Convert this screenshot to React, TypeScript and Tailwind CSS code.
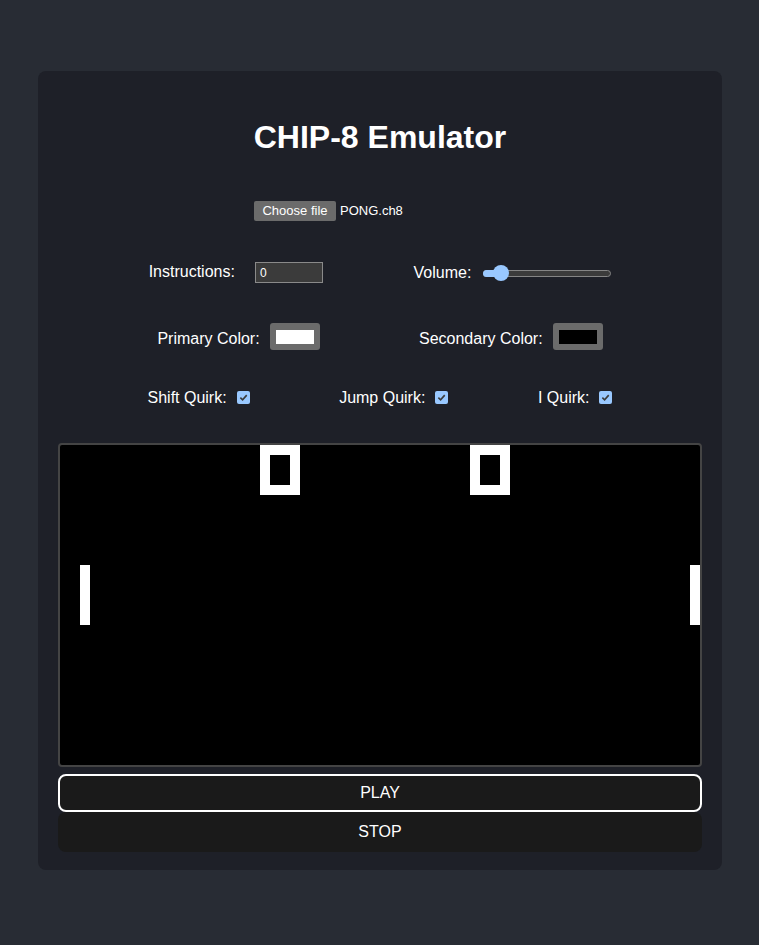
import React from 'react';

// CHIP-8 display: 64x32 pixels, drawn 10x
const pixels: [number, number][] = [];

function addDigitZero(x: number, y: number) {
  const rows = [0xf0, 0x90, 0x90, 0x90, 0xf0];
  rows.forEach((row, dy) => {
    for (let dx = 0; dx < 4; dx++) {
      if (row & (0x80 >> dx)) pixels.push([x + dx, y + dy]);
    }
  });
}

addDigitZero(20, 0);
addDigitZero(41, 0);
for (let y = 12; y < 18; y++) {
  pixels.push([2, y]);
  pixels.push([63, y]);
}

function Checkbox() {
  return (
    <span className="ml-[10px] inline-flex h-[13px] w-[13px] items-center justify-center rounded-[2px] bg-[#99c8ff]">
      <svg width="9" height="9" viewBox="0 0 10 10">
        <path d="M1.5 5.2 L4 7.6 L8.6 2.4" fill="none" stroke="#3b3b3b" strokeWidth="1.8" />
      </svg>
    </span>
  );
}

function Swatch({ color }: { color: string }) {
  return (
    <span className="ml-[10px] flex h-[27px] w-[50px] items-center justify-center rounded-[3px] bg-[#6b6b6b]">
      <span className="h-[14px] w-[38px]" style={{ background: color }} />
    </span>
  );
}

export default function App() {
  return (
    <div
      className="min-h-screen bg-[#282c34] pt-[71px] pb-[75px] text-white"
      style={{ fontFamily: '"Liberation Sans", Arial, sans-serif' }}
    >
      <div className="ml-[38px] w-[684px] rounded-lg bg-[#1e2028] px-5 pt-[48px] pb-[18px]">
        <h1 className="text-center text-[32px] font-bold leading-[37px]">CHIP-8 Emulator</h1>

        <div className="mt-[45px] flex justify-center">
          <div className="flex h-5 w-[252px] items-center">
            <span className="flex h-5 w-[82px] items-center justify-center rounded-[2px] bg-[#6b6b6b] text-[13px]">
              Choose file
            </span>
            <span className="ml-1 text-[13px]">PONG.ch8</span>
          </div>
        </div>

        <div className="mt-[41px] flex h-[21px] items-center justify-evenly text-base">
          <div className="flex items-center">
            <span className="-mt-px">Instructions:</span>
            <span className="ml-5 flex h-[21px] w-[68px] items-center border border-[#8a8a8a] bg-[#3b3b3b] px-[4px] text-[12px]">
              0
            </span>
          </div>
          <div className="flex items-center">
            <span>Volume:</span>
            <div className="relative ml-3 h-4 w-[128px]">
              <div className="absolute top-[5px] right-0 left-0 h-[7px] rounded-full border border-[#858585] bg-[#3b3b3b]" />
              <div className="absolute top-[5px] left-0 h-[7px] w-[18px] rounded-l-full bg-[#99c8ff]" />
              <div className="absolute top-0 left-[10px] h-4 w-4 rounded-full bg-[#99c8ff]" />
            </div>
          </div>
        </div>

        <div className="mt-[40px] flex h-[27px] items-center justify-evenly text-base">
          <div className="flex items-center">
            <span className="pt-1">Primary Color:</span>
            <Swatch color="#ffffff" />
          </div>
          <div className="flex items-center">
            <span className="pt-1">Secondary Color:</span>
            <Swatch color="#000000" />
          </div>
        </div>

        <div className="mt-[38px] flex h-[18px] items-center justify-evenly text-base">
          <div className="flex items-center">
            <span className="pt-0.5">Shift Quirk:</span>
            <Checkbox />
          </div>
          <div className="flex items-center">
            <span className="pt-0.5">Jump Quirk:</span>
            <Checkbox />
          </div>
          <div className="flex items-center">
            <span className="pt-0.5">I Quirk:</span>
            <Checkbox />
          </div>
        </div>

        <div className="mt-[37px] rounded-[4px] border-2 border-[#444] bg-black">
          <svg width="640" height="320" viewBox="0 0 64 32" className="block" shapeRendering="crispEdges">
            {pixels.map(([x, y]) => (
              <rect key={`${x}-${y}`} x={x} y={y} width="1" height="1" fill="#fff" />
            ))}
          </svg>
        </div>

        <button className="mt-[7px] flex h-[38px] w-full items-center justify-center rounded-lg border-2 border-white bg-[#1a1a1a] text-base">
          PLAY
        </button>
        <button className="flex h-10 w-full items-center justify-center rounded-lg bg-[#1a1a1a] text-base">
          STOP
        </button>
      </div>
    </div>
  );
}
